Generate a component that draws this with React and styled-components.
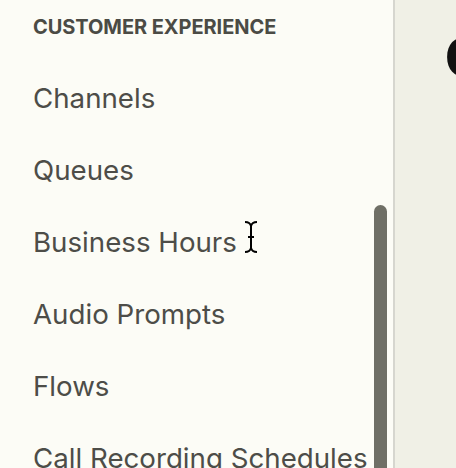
import React from "react";
import styled, { createGlobalStyle } from "styled-components";

const GlobalStyle = createGlobalStyle`
  html, body {
    margin: 0;
    padding: 0;
    height: 100%;
    overflow: hidden;
  }
  body {
    font-family: Inter, "Noto Sans", sans-serif;
  }
`;

const Layout = styled.div`
  display: flex;
  width: 456px;
  height: 468px;
  overflow: hidden;
`;

const Sidebar = styled.nav`
  position: relative;
  flex: 0 0 395px;
  background: #fcfcf6;
  border-right: 2px solid #d6d6cf;
  padding: 15px 0 0 33px;
  box-sizing: border-box;
`;

const SectionTitle = styled.div`
  font-size: 20px;
  line-height: 24px;
  font-weight: 700;
  color: #4b4b45;
  text-transform: uppercase;
  letter-spacing: -0.06px;
  margin-bottom: 23px;
`;

const NavItem = styled.a`
  display: block;
  height: 72px;
  font-size: 27.7px;
  line-height: 72px;
  color: #4d4d48;
  white-space: nowrap;
  text-decoration: none;
`;

const ScrollThumb = styled.div`
  position: absolute;
  top: 205px;
  right: 6px;
  width: 13px;
  height: 300px;
  border-radius: 7px;
  background: #6f6f66;
`;

const Cursor = styled.svg`
  position: absolute;
  left: 243px;
  top: 220px;
`;

const Main = styled.main`
  flex: 1;
  background: #f0f0e6;
  padding: 26px 0 0 50px;
  overflow: hidden;
`;

const PageTitle = styled.h1`
  margin: 0;
  font-size: 52px;
  font-weight: 800;
  color: #111;
  white-space: nowrap;
`;

const items = [
  "Channels",
  "Queues",
  "Business Hours",
  "Audio Prompts",
  "Flows",
  "Call Recording Schedules",
];

const App = () => {
  return (
    <>
      <GlobalStyle />
      <Layout>
        <Sidebar>
          <SectionTitle>Customer Experience</SectionTitle>
          {items.map((item) => (
            <NavItem key={item}>{item}</NavItem>
          ))}
          <ScrollThumb />
          <Cursor width="16" height="34" viewBox="0 0 16 34">
            <path
              d="M2 2 Q7 2 8 6 Q9 2 14 2 M8 6 V28 M2 32 Q7 32 8 28 Q9 32 14 32 M5 17 H11"
              fill="none"
              stroke="#000"
              strokeWidth="2"
            />
          </Cursor>
        </Sidebar>
        <Main>
          <PageTitle>Channels</PageTitle>
        </Main>
      </Layout>
    </>
  );
};

export default App;
